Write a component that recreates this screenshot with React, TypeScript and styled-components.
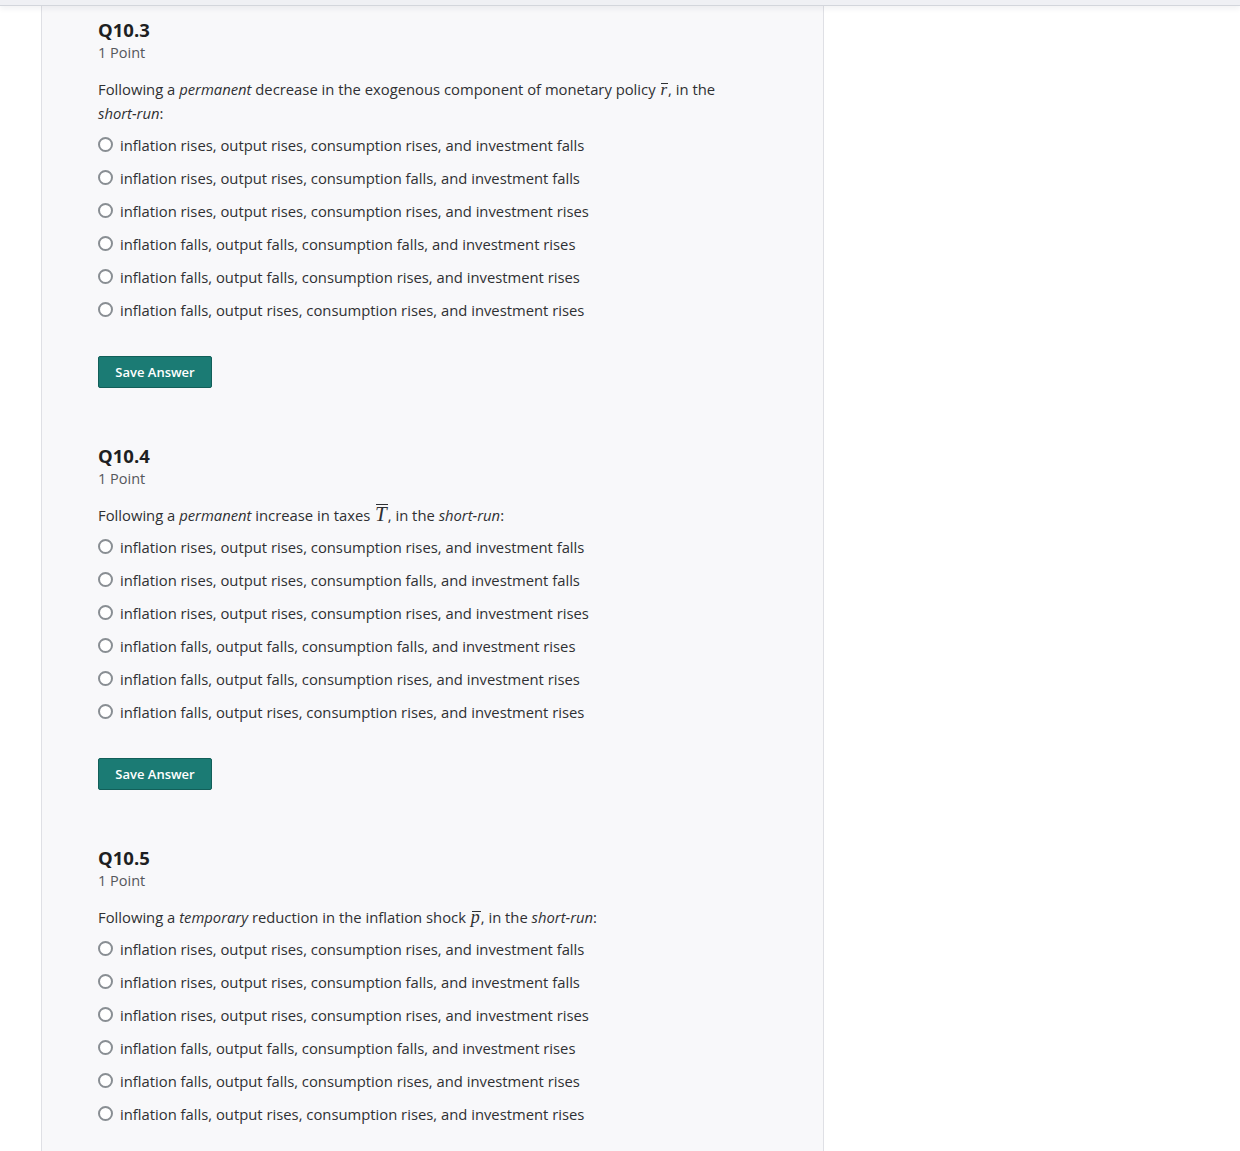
import React from "react";
import styled, { createGlobalStyle } from "styled-components";

const Global = createGlobalStyle`
  html, body { margin: 0; padding: 0; background: #ffffff; }
  body { font-family: "Open Sans", "Noto Sans", sans-serif; color: #2f3033; }
  * { box-sizing: border-box; }
`;

const Page = styled.div`
  position: relative;
  width: 1240px;
  height: 1151px;
  overflow: hidden;
  background: #ffffff;
`;

const TopBar = styled.div`
  position: relative;
  z-index: 2;
  height: 6px;
  background: #eff0f4;
  border-bottom: 1px solid #d3d6dc;
  box-shadow: 0 2px 6px rgba(30, 40, 60, 0.08);
`;

const Body = styled.div`
  display: flex;
  height: calc(100% - 6px);
`;

const LeftGutter = styled.div`
  width: 41px;
  flex: none;
`;

const Panel = styled.main`
  width: 783px;
  flex: none;
  background: #f8f8fa;
  border-left: 1px solid #dfe0e5;
  border-right: 1px solid #dfe0e5;
  padding: 12px 56px 0 56px;
`;

const Question = styled.section`
  & + & {
    margin-top: 56px;
  }
`;

const Title = styled.h2`
  margin: 0;
  font-size: 18.5px;
  line-height: 24px;
  font-weight: 700;
  color: #1e1f22;
`;

const Points = styled.div`
  font-size: 14.5px;
  line-height: 22px;
  color: #55575c;
`;

const Prompt = styled.p`
  margin: 13px 0 0;
  font-size: 14.8px;
  line-height: 24px;
  color: #2f3033;
`;

const Em = styled.em`
  font-style: italic;
  white-space: nowrap;
`;

const MathVar = styled.span<{ $size?: number; $barTop?: number }>`
  position: relative;
  display: inline-block;
  font-family: "Liberation Serif", "DejaVu Serif", serif;
  font-style: italic;
  font-size: ${(p) => p.$size ?? 17}px;
  line-height: 1;
  padding: 0 1px;
  &::after {
    content: "";
    position: absolute;
    left: 2px;
    right: 0;
    top: ${(p) => p.$barTop ?? 2}px;
    height: 1px;
    background: #2f3033;
  }
`;

const Options = styled.ul`
  list-style: none;
  margin: 3px 0 0;
  padding: 0;
`;

const Option = styled.li`
  display: flex;
  align-items: center;
  height: 33px;
  gap: 7px;
  font-size: 14.8px;
  color: #2f3033;
  cursor: pointer;
`;

const Radio = styled.span`
  width: 15px;
  height: 15px;
  flex: none;
  border-radius: 50%;
  border: 2px solid #898e93;
  background: #ffffff;
`;

const SaveButton = styled.button`
  margin-top: 30px;
  height: 32px;
  width: 114px;
  padding: 0;
  background: #1b7b74;
  border: 1px solid #125f59;
  border-radius: 2px;
  color: #ffffff;
  font-family: "Open Sans", "Noto Sans", sans-serif;
  font-size: 13px;
  font-weight: 600;
  cursor: pointer;
`;

const OPTIONS = [
  "inflation rises, output rises, consumption rises, and investment falls",
  "inflation rises, output rises, consumption falls, and investment falls",
  "inflation rises, output rises, consumption rises, and investment rises",
  "inflation falls, output falls, consumption falls, and investment rises",
  "inflation falls, output falls, consumption rises, and investment rises",
  "inflation falls, output rises, consumption rises, and investment rises",
];

type Q = { id: string; prompt: React.ReactNode };

const QUESTIONS: Q[] = [
  {
    id: "Q10.3",
    prompt: (
      <>
        Following a <Em>permanent</Em> decrease in the exogenous component of monetary policy{" "}
        <MathVar $size={17} $barTop={2}>r</MathVar>, in the <Em>short-run</Em>:
      </>
    ),
  },
  {
    id: "Q10.4",
    prompt: (
      <>
        Following a <Em>permanent</Em> increase in taxes{" "}
        <MathVar $size={21} $barTop={0}>T</MathVar>, in the <Em>short-run</Em>:
      </>
    ),
  },
  {
    id: "Q10.5",
    prompt: (
      <>
        Following a <Em>temporary</Em> reduction in the inflation shock{" "}
        <MathVar $size={18} $barTop={3}>p</MathVar>, in the <Em>short-run</Em>:
      </>
    ),
  },
];

export default function App() {
  return (
    <Page>
      <Global />
      <TopBar />
      <Body>
        <LeftGutter />
        <Panel>
          {QUESTIONS.map((q) => (
            <Question key={q.id}>
              <Title>{q.id}</Title>
              <Points>1 Point</Points>
              <Prompt>{q.prompt}</Prompt>
              <Options>
                {OPTIONS.map((o) => (
                  <Option key={o}>
                    <Radio />
                    <span>{o}</span>
                  </Option>
                ))}
              </Options>
              <SaveButton type="button">Save Answer</SaveButton>
            </Question>
          ))}
        </Panel>
      </Body>
    </Page>
  );
}
